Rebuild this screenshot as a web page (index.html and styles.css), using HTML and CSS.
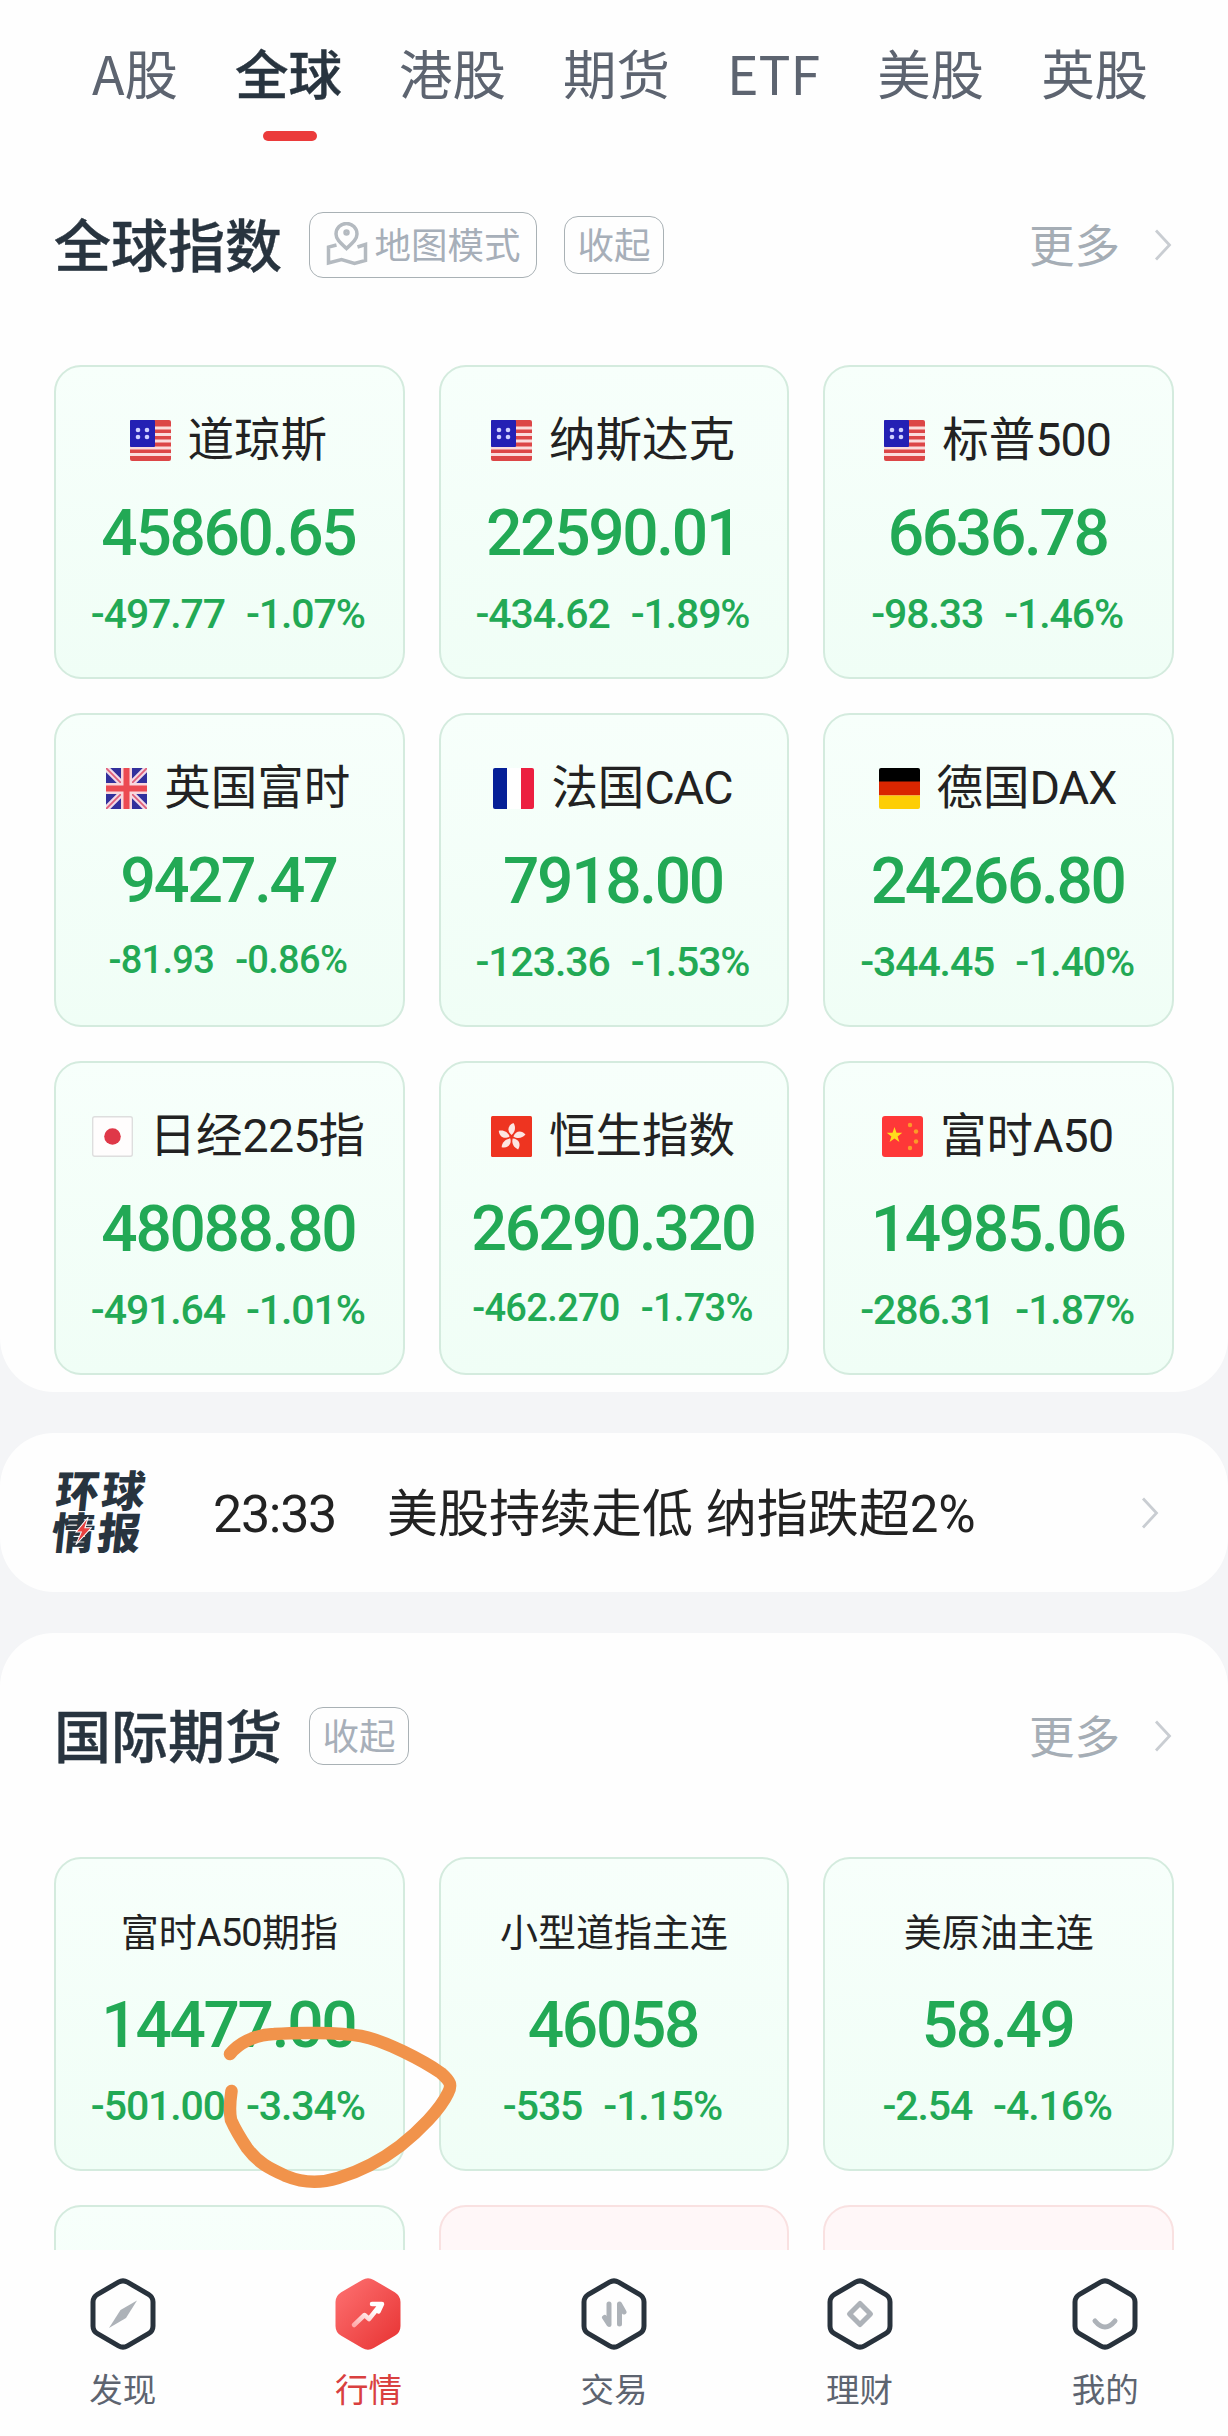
FILE: index.html
```html
<!DOCTYPE html>
<html lang="zh-CN">
  <head>
    <meta charset="UTF-8" />
    <meta name="viewport" content="width=device-width, initial-scale=1.0" />
    <title>全球行情</title>
    <link rel="stylesheet" href="styles.css">
  </head>
  <body>
    <!-- shared icons -->
    <svg class="sprite">
      <symbol id="flag-us" viewBox="0 0 41 41">
        <rect width="41" height="41" rx="2" fill="#dc4647" />
        <path d="M25 8h16M25 14.500h16M25 21h16M0 28h41M0 34.500h41" stroke="#fbdcdc" stroke-width="2.800" />
        <rect width="25" height="27" rx="1" fill="#2420b4" />
        <g fill="#cfd0ff">
          <circle cx="8" cy="10" r="2.300" />
          <circle cx="17" cy="10" r="2.300" />
          <circle cx="8" cy="17" r="2.300" />
          <circle cx="17" cy="17" r="2.300" />
        </g>
      </symbol>
      <symbol id="flag-gb" viewBox="0 0 41 41">
        <rect width="41" height="41" rx="1" fill="#32309c" />
        <path d="M0 0l41 41M41 0L0 41" stroke="#f3d9e6" stroke-width="6" />
        <path d="M0 0l41 41M41 0L0 41" stroke="#e0607a" stroke-width="1.800" />
        <path d="M20.500 0v41M0 20.500h41" stroke="#f9d7dc" stroke-width="11" />
        <path d="M20.500 0v41M0 20.500h41" stroke="#ec4a52" stroke-width="6" />
      </symbol>
      <symbol id="flag-fr" viewBox="0 0 41 41">
        <rect width="41" height="41" rx="2" fill="#fff" />
        <path d="M2 0h12v41H2a2 2 0 0 1-2-2V2a2 2 0 0 1 2-2z" fill="#051f97" />
        <path d="M28 0h11a2 2 0 0 1 2 2v37a2 2 0 0 1-2 2H28z" fill="#ec1f40" />
      </symbol>
      <symbol id="flag-de" viewBox="0 0 41 41">
        <path d="M2 0h37a2 2 0 0 1 2 2v12H0V2a2 2 0 0 1 2-2z" fill="#000" />
        <path d="M0 13.500h41v14H0z" fill="#d92600" />
        <path d="M0 27.500h41V39a2 2 0 0 1-2 2H2a2 2 0 0 1-2-2z" fill="#fdce05" />
      </symbol>
      <symbol id="flag-jp" viewBox="0 0 41 41">
        <rect x="0.700" y="0.700" width="39.600" height="39.600" rx="2" fill="#fffdfd" stroke="#dedede" stroke-width="1.400" />
        <circle cx="20.500" cy="20.500" r="8.300" fill="#df3848" />
      </symbol>
      <symbol id="flag-hk" viewBox="0 0 41 41">
        <rect width="41" height="41" rx="1.500" fill="#ee3420" />
        <g fill="#fde6e2">
          <path id="petal" d="M20.500 19c-5-4-3.500-10 2-12 2.600 4 1.800 9-2 12z" />
          <use href="#petal" transform="rotate(72 20.500 21)" />
          <use href="#petal" transform="rotate(144 20.500 21)" />
          <use href="#petal" transform="rotate(216 20.500 21)" />
          <use href="#petal" transform="rotate(288 20.500 21)" />
        </g>
      </symbol>
      <symbol id="flag-cn" viewBox="0 0 41 41">
        <rect width="41" height="41" rx="3" fill="#fe3838" />
        <path d="M12.500 11l2 5.800h5.800l-4.700 3.600 1.800 5.700-4.900-3.500-4.900 3.500 1.800-5.700-4.700-3.600h5.800z" fill="#ffdc1c" />
        <g fill="#fc9a28">
          <circle cx="28" cy="9" r="2.200" />
          <circle cx="34" cy="15.500" r="2.200" />
          <circle cx="34" cy="25.500" r="2.200" />
          <circle cx="28" cy="32" r="2.200" />
        </g>
      </symbol>
      <symbol id="chevron" viewBox="0 0 18 32">
        <path d="M2 1.500L15.500 16 2 30.500" fill="none" stroke="currentColor" stroke-width="2.800" />
      </symbol>
      <symbol id="hexagon" viewBox="0 0 66 72">
        <path d="M28.500 4.200Q33 1.600 37.500 4.200L58.500 16.300Q63 19 63 24V48Q63 53 58.500 55.700L37.500 67.800Q33 70.400 28.500 67.800L7.500 55.700Q3 53 3 48V24Q3 19 7.500 16.300Z" />
      </symbol>
    </svg>

    <div class="app">
      <section class="panel indices">
        <nav class="tabs">
          <a class="tab">A股</a>
          <a class="tab active">全球</a>
          <a class="tab">港股</a>
          <a class="tab">期货</a>
          <a class="tab">ETF</a>
          <a class="tab">美股</a>
          <a class="tab">英股</a>
        </nav>

        <div class="section-head">
          <h2>全球指数</h2>
          <button class="pill map">
            <svg class="map-icon" viewBox="0 0 42 44">
              <path d="M20.500 26.500C14 20.500 10 17 10 12a10.500 10.500 0 0 1 21 0c0 5-4 8.500-10.500 14.500z" />
              <path d="M10.500 23L2.500 25v16l13-3.500 13 4 11-3V22.500l-8 2.500" />
              <circle cx="20.500" cy="10.500" r="1.500" />
            </svg>地图模式
          </button>
          <button class="pill">收起</button>
          <a class="more"><span>更多</span><svg class="chevron"><use href="#chevron" /></svg></a>
        </div>

        <div class="grid">
          <div class="card">
            <div class="name"><svg class="flag"><use href="#flag-us" /></svg>道琼斯</div>
            <div class="price">45860.65</div>
            <div class="change"><span>-497.77</span><span>-1.07%</span></div>
          </div>
          <div class="card">
            <div class="name"><svg class="flag"><use href="#flag-us" /></svg>纳斯达克</div>
            <div class="price">22590.01</div>
            <div class="change"><span>-434.62</span><span>-1.89%</span></div>
          </div>
          <div class="card">
            <div class="name"><svg class="flag"><use href="#flag-us" /></svg>标普<span class="latin">500</span></div>
            <div class="price">6636.78</div>
            <div class="change"><span>-98.33</span><span>-1.46%</span></div>
          </div>
          <div class="card compact">
            <div class="name"><svg class="flag"><use href="#flag-gb" /></svg>英国富时</div>
            <div class="price">9427.47</div>
            <div class="change"><span>-81.93</span><span>-0.86%</span></div>
          </div>
          <div class="card">
            <div class="name"><svg class="flag"><use href="#flag-fr" /></svg>法国<span class="latin">CAC</span></div>
            <div class="price">7918.00</div>
            <div class="change"><span>-123.36</span><span>-1.53%</span></div>
          </div>
          <div class="card">
            <div class="name"><svg class="flag"><use href="#flag-de" /></svg>德国<span class="latin">DAX</span></div>
            <div class="price">24266.80</div>
            <div class="change"><span>-344.45</span><span>-1.40%</span></div>
          </div>
          <div class="card">
            <div class="name"><svg class="flag"><use href="#flag-jp" /></svg>日经<span class="latin">225</span>指</div>
            <div class="price">48088.80</div>
            <div class="change"><span>-491.64</span><span>-1.01%</span></div>
          </div>
          <div class="card compact">
            <div class="name"><svg class="flag"><use href="#flag-hk" /></svg>恒生指数</div>
            <div class="price">26290.320</div>
            <div class="change"><span>-462.270</span><span>-1.73%</span></div>
          </div>
          <div class="card">
            <div class="name"><svg class="flag"><use href="#flag-cn" /></svg>富时<span class="latin">A50</span></div>
            <div class="price">14985.06</div>
            <div class="change"><span>-286.31</span><span>-1.87%</span></div>
          </div>
        </div>
      </section>

      <section class="panel news">
        <div class="news-logo">
          <span>环球</span>
          <span>情报</span>
          <svg class="bolt" viewBox="0 0 16 26"><path d="M11 0L1 14h5L2 26 15 10H9z" /></svg>
        </div>
        <span class="time">23:33</span>
        <span class="headline">美股持续走低 纳指跌超2%</span>
        <svg class="chevron"><use href="#chevron" /></svg>
      </section>

      <section class="panel futures">
        <div class="section-head">
          <h2>国际期货</h2>
          <button class="pill">收起</button>
          <a class="more"><span>更多</span><svg class="chevron"><use href="#chevron" /></svg></a>
        </div>

        <div class="grid">
          <div class="card">
            <div class="name small">富时<span class="latin">A50</span>期指</div>
            <div class="price">14477.00</div>
            <div class="change"><span>-501.00</span><span>-3.34%</span></div>
          </div>
          <div class="card">
            <div class="name small">小型道指主连</div>
            <div class="price">46058</div>
            <div class="change"><span>-535</span><span>-1.15%</span></div>
          </div>
          <div class="card">
            <div class="name small">美原油主连</div>
            <div class="price">58.49</div>
            <div class="change"><span>-2.54</span><span>-4.16%</span></div>
          </div>
          <div class="card"></div>
          <div class="card up"></div>
          <div class="card up"></div>
        </div>

        <!-- hand-drawn marker around the A50 change -->
        <svg class="marker" viewBox="0 0 240 170">
          <path d="M11 35C19 25 34 16 55 15C75 13.500 120 13 142 17C165 21 205 42 222 54C232 63 233 66 229 74C221 91 200 112 181 127C160 143 139 153 119 159C100 165 84 164 67 157C52 150 40 145 28 129C20 117 16 110 12 101C10 91 11 82 12.500 72" />
        </svg>
      </section>

      <nav class="tabbar">
        <a class="item">
          <svg class="icon" viewBox="0 0 66 72">
            <use href="#hexagon" class="outline" />
            <path d="M47 22.500L30.500 32 19 50 36 40z" fill="#adb2b8" />
          </svg>
          <span>发现</span>
        </a>
        <a class="item active">
          <svg class="icon" viewBox="0 0 66 72">
            <defs>
              <linearGradient id="red" x1="0" y1="0" x2="1" y2="1">
                <stop offset="0" stop-color="#fd7070" />
                <stop offset="1" stop-color="#e83434" />
              </linearGradient>
              <linearGradient id="arrow" x1="0" y1="1" x2="1" y2="0">
                <stop offset="0" stop-color="#ffabab" />
                <stop offset="0.700" stop-color="#fff" />
              </linearGradient>
            </defs>
            <use href="#hexagon" class="solid" />
            <path d="M19 47L29.500 37 34 41 44.500 28M37 26h10L43.500 33.500" fill="none" stroke="url(#arrow)" stroke-width="4.500" stroke-linecap="round" stroke-linejoin="round" />
          </svg>
          <span>行情</span>
        </a>
        <a class="item">
          <svg class="icon" viewBox="0 0 66 72">
            <use href="#hexagon" class="outline" />
            <path d="M28 26v20.500l-4.500-7M38.500 46V26l4.500 8" fill="none" stroke="#adb2b8" stroke-width="5" stroke-linecap="round" stroke-linejoin="round" />
          </svg>
          <span>交易</span>
        </a>
        <a class="item">
          <svg class="icon" viewBox="0 0 66 72">
            <use href="#hexagon" class="outline" />
            <path d="M33 25.500L43.500 36 33 46.500 22.500 36z" fill="none" stroke="#adb2b8" stroke-width="5" stroke-linejoin="round" />
          </svg>
          <span>理财</span>
        </a>
        <a class="item">
          <svg class="icon" viewBox="0 0 66 72">
            <use href="#hexagon" class="outline" />
            <path d="M23 43q10 12 20 0" fill="none" stroke="#adb2b8" stroke-width="5" stroke-linecap="round" />
          </svg>
          <span>我的</span>
        </a>
      </nav>
    </div>
  </body>
</html>
```
FILE: styles.css
```css
* {
  box-sizing: border-box;
}

body {
  margin: 0;
  font-family: "Noto Sans CJK SC", "Noto Sans", sans-serif;
  color: #222;
  background-color: #f4f5f7;
}

.sprite {
  display: none;
}

.app {
  display: flex;
  flex-direction: column;
  gap: 41px;
  height: 2436px;
  overflow: hidden;
}

.panel {
  background-color: #fefefe;
  border-radius: 54px;
}

.indices {
  height: 1392px;
  padding: 0 54px;
  border-radius: 0 0 54px 54px;
}

/* top tabs */
.tabs {
  display: flex;
  gap: 57px;
  height: 180px;
  padding: 33px 0 0 38px;
}

.tab {
  position: relative;
  font-size: 53.500px;
  line-height: 78px;
  color: #5d6470;
  white-space: nowrap;
}

.tab.active {
  color: #28343f;
  font-weight: 500;
  -webkit-text-stroke: 0.4px #28343f;
}

.tab.active::after {
  content: "";
  position: absolute;
  left: 50%;
  top: 98px;
  width: 54px;
  height: 10px;
  margin-left: -26px;
  border-radius: 5px;
  background-color: #eb3b3b;
}

/* section title row */
.section-head {
  display: flex;
  align-items: center;
  height: 130px;
}

h2 {
  margin: 0 27px 7px 0;
  font-size: 57px;
  line-height: 80px;
  font-weight: 500;
  color: #28343f;
  -webkit-text-stroke: 0.4px #28343f;
}

.pill {
  display: flex;
  align-items: center;
  justify-content: center;
  width: 100px;
  height: 58px;
  padding: 0 0 2px;
  border: 1px solid #a9b1b5;
  border-radius: 14px;
  background: none;
  font-family: inherit;
  font-size: 36.500px;
  line-height: 50px;
  color: #a7afb9;
}

.pill.map {
  width: 228px;
  height: 66px;
  margin-right: 27px;
}

.map-icon {
  width: 42px;
  height: 44px;
  margin-right: 7px;
  fill: none;
  stroke: #b4bac0;
  stroke-width: 3.500;
}

.more {
  display: flex;
  align-items: center;
  gap: 34px;
  margin-left: auto;
  margin-right: 2px;
  font-size: 45.500px;
  line-height: 60px;
  color: #a5adb5;
}

.more span {
  margin-bottom: 4px;
}

.chevron {
  width: 18px;
  height: 32px;
  color: #c9cdd2;
}

/* quote cards */
.grid {
  display: grid;
  grid-template-columns: repeat(3, 1fr);
  grid-auto-rows: 314px;
  gap: 34px;
}

.indices .grid {
  margin-top: 55px;
}

.card {
  padding-top: 43px;
  border: 2px solid #d4ebde;
  border-radius: 27px;
  background: linear-gradient(#f7fffb, #f0fef6);
  color: #22a955;
  text-align: center;
}

.card.up {
  border-color: #f9e1e1;
  background: #fff7f8;
}

.name {
  display: flex;
  align-items: center;
  justify-content: center;
  height: 60px;
  padding-right: 2px;
  font-family: Roboto, "Noto Sans CJK SC", sans-serif;
  font-size: 46.500px;
  line-height: 63px;
  color: #222;
  white-space: nowrap;
}

.name.small {
  padding: 2px 0 0;
  font-size: 38px;
}

.latin {
  letter-spacing: -0.800px;
}

.flag {
  width: 41px;
  height: 41px;
  margin-right: 17px;
}

.price {
  margin-top: 26px;
  padding-right: 2px;
  font-family: Roboto, sans-serif;
  font-size: 64px;
  font-weight: 500;
  line-height: 76px;
  letter-spacing: -2.300px;
}

.change {
  display: flex;
  justify-content: center;
  gap: 21px;
  margin-top: 17px;
  padding-right: 3px;
  font-family: Roboto, sans-serif;
  font-size: 41px;
  font-weight: 500;
  line-height: 50px;
  letter-spacing: -1.100px;
}

.compact .price {
  font-size: 63px;
  line-height: 74px;
}

.compact .change {
  font-size: 38px;
  letter-spacing: -0.700px;
}

/* news strip */
.news {
  display: flex;
  align-items: center;
  flex: none;
  height: 159px;
  padding: 0 69px 0 54px;
}

.news-logo {
  position: relative;
  display: flex;
  flex-direction: column;
  width: 92px;
  padding-bottom: 7px;
  font-size: 43px;
  font-weight: 900;
  line-height: 42px;
  letter-spacing: 3px;
  color: #28343f;
  white-space: nowrap;
  transform: skewX(-6deg);
}

.bolt {
  position: absolute;
  left: 23px;
  top: 50px;
  width: 17px;
  height: 28px;
  fill: #e8413f;
  stroke: #fff;
  stroke-width: 1;
}

.time {
  width: 174px;
  margin-left: 67px;
  padding-top: 3px;
  font-family: Roboto, sans-serif;
  font-size: 52px;
  letter-spacing: -1.300px;
}

.headline {
  padding-top: 5px;
  font-family: Roboto, "Noto Sans CJK SC", sans-serif;
  font-size: 51px;
  line-height: 70px;
}

.news .chevron {
  margin-left: auto;
}

/* futures */
.futures {
  position: relative;
  height: 617px;
  flex: none;
  padding: 38px 54px 0;
  border-radius: 54px 54px 0 0;
  overflow: hidden;
}

.futures .grid {
  margin-top: 56px;
}

.marker {
  position: absolute;
  left: 219px;
  top: 386px;
  width: 240px;
  height: 170px;
  fill: none;
  stroke: #f1934b;
  stroke-width: 12.500;
  stroke-linecap: round;
  stroke-linejoin: round;
}

/* bottom bar */
.tabbar {
  display: flex;
  flex: none;
  height: 186px;
  margin-top: -41px;
  padding-top: 28px;
  background-color: #fefefe;
}

.item {
  display: flex;
  flex: 1;
  flex-direction: column;
  align-items: center;
  gap: 16px;
  font-size: 33.500px;
  line-height: 44px;
  color: #5d6470;
}

.item.active {
  color: #d9403f;
}

.icon {
  width: 66px;
  height: 72px;
}

.outline {
  fill: none;
  stroke: #28323c;
  stroke-width: 5;
}

.solid {
  fill: url(#red);
  stroke: url(#red);
  stroke-width: 5;
}
```
